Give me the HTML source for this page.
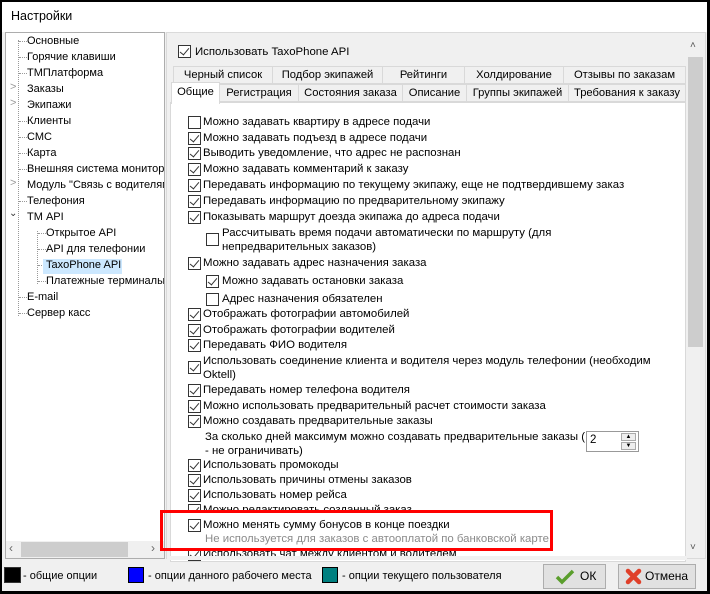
<!DOCTYPE html>
<html><head><meta charset="utf-8"><style>
*{margin:0;padding:0;box-sizing:border-box}
body{width:710px;height:594px;background:#000;font-family:"Liberation Sans",sans-serif;font-size:11.4px;color:#000;position:relative;overflow:hidden}
.a{position:absolute;white-space:nowrap}
#win{position:absolute;left:2px;top:2px;width:705px;height:589px;background:#f0f0f0;overflow:hidden}
#title{position:absolute;left:0;top:0;width:705px;height:30px;background:#fff;font-size:12.5px;padding:7px 0 0 9px}
.cb{position:absolute;width:13px;height:13px;border:1px solid #333;background:#fff}
.cb.c::after{content:"";position:absolute;left:3px;top:0px;width:4px;height:8px;border:solid #333;border-width:0 1.3px 1.3px 0;transform:rotate(40deg)}
.tab{position:absolute;height:18px;border:1px solid #d9d9d9;background:#f0f0f0;text-align:center;line-height:16px;font-size:11.2px}
.t{position:absolute;white-space:nowrap;line-height:14px}
.tr .t{font-size:11px}
.dot{position:absolute;border-left:1px dotted #999}
.hd{position:absolute;border-top:1px dotted #999;height:0}
</style></head><body>
<div id="win">
<div id="title">Настройки</div>
<div class="a" style="left:3px;top:30px;width:160px;height:527px;background:#fff;border:1px solid #adadad"></div>
<div class="dot" style="left:16px;top:38px;height:276px"></div>
<div class="dot" style="left:35px;top:229px;height:53px"></div>
<div style="position:absolute;left:0;top:0">
<div class="hd" style="left:17px;top:39px;width:8px"></div>
<div class="hd" style="left:17px;top:55px;width:8px"></div>
<div class="hd" style="left:17px;top:71px;width:8px"></div>
<div class="hd" style="left:17px;top:119px;width:8px"></div>
<div class="hd" style="left:17px;top:135px;width:8px"></div>
<div class="hd" style="left:17px;top:151px;width:8px"></div>
<div class="hd" style="left:17px;top:167px;width:8px"></div>
<div class="hd" style="left:17px;top:199px;width:8px"></div>
<div class="hd" style="left:36px;top:231px;width:8px"></div>
<div class="hd" style="left:36px;top:247px;width:8px"></div>
<div class="hd" style="left:36px;top:263px;width:8px"></div>
<div class="hd" style="left:36px;top:279px;width:8px"></div>
<div class="hd" style="left:17px;top:295px;width:8px"></div>
<div class="hd" style="left:17px;top:311px;width:8px"></div>
</div>
<div class="a" style="left:8px;top:79px;color:#999;font-size:11px">&gt;</div>
<div class="a" style="left:8px;top:95px;color:#999;font-size:11px">&gt;</div>
<div class="a" style="left:8px;top:175px;color:#999;font-size:11px">&gt;</div>
<div class="a" style="left:7px;top:206px;color:#333;font-size:10px">&#8964;</div>
<div class="a" style="left:41px;top:257px;width:79px;height:15px;background:#cce8ff"></div>
<div class="tr">
<div class="t" style="left:25px;top:32px">Основные</div>
<div class="t" style="left:25px;top:48px">Горячие клавиши</div>
<div class="t" style="left:25px;top:64px">ТМПлатформа</div>
<div class="t" style="left:25px;top:80px">Заказы</div>
<div class="t" style="left:25px;top:96px">Экипажи</div>
<div class="t" style="left:25px;top:112px">Клиенты</div>
<div class="t" style="left:25px;top:128px">СМС</div>
<div class="t" style="left:25px;top:144px">Карта</div>
<div class="t" style="left:25px;top:160px;width:137px;overflow:hidden">Внешняя система мониторинга</div>
<div class="t" style="left:25px;top:176px;width:137px;overflow:hidden">Модуль "Связь с водителями"</div>
<div class="t" style="left:25px;top:192px">Телефония</div>
<div class="t" style="left:25px;top:208px">ТМ API</div>
<div class="t" style="left:44px;top:224px">Открытое API</div>
<div class="t" style="left:44px;top:240px">API для телефонии</div>
<div class="t" style="left:44px;top:256px">TaxoPhone API</div>
<div class="t" style="left:44px;top:272px;width:118px;overflow:hidden">Платежные терминалы</div>
<div class="t" style="left:25px;top:288px">E-mail</div>
<div class="t" style="left:25px;top:304px">Сервер касс</div>
</div>
<div class="a" style="left:4px;top:539px;width:158px;height:17px;background:#f0f0f0"></div>
<div class="a" style="left:19px;top:540px;width:107px;height:15px;background:#cdcdcd"></div>
<div class="a" style="left:7px;top:539px;color:#666;font-size:12px">&lsaquo;</div>
<div class="a" style="left:149px;top:539px;color:#666;font-size:12px">&rsaquo;</div>
<div class="a" style="left:164px;top:30px;width:540px;height:527px;background:#f0f0f0;border:1px solid #dadada"></div>
<div class="a" style="left:685px;top:36px;width:17px;height:520px;background:#f0f0f0"></div>
<div class="a" style="left:686px;top:55px;width:15px;height:290px;background:#cdcdcd"></div>
<div class="a" style="left:688px;top:38px;color:#555;font-size:10px">&#708;</div>
<div class="a" style="left:688px;top:540px;color:#555;font-size:10px">&#709;</div>
<div class="cb c" style="left:176px;top:43px"></div>
<div class="t" style="left:193px;top:43px">Использовать TaxoPhone API</div>
<div class="tab" style="left:171px;top:64px;width:100px">Черный список</div>
<div class="tab" style="left:270px;top:64px;width:111px">Подбор экипажей</div>
<div class="tab" style="left:380px;top:64px;width:83px">Рейтинги</div>
<div class="tab" style="left:462px;top:64px;width:100px">Холдирование</div>
<div class="tab" style="left:561px;top:64px;width:123px">Отзывы по заказам</div>
<div class="a" style="left:168px;top:100px;width:516px;height:460px;background:#fff;border:1px solid #d9d9d9"></div>
<div class="tab" style="left:217px;top:82px;width:80px">Регистрация</div>
<div class="tab" style="left:296px;top:82px;width:105px">Состояния заказа</div>
<div class="tab" style="left:400px;top:82px;width:65px">Описание</div>
<div class="tab" style="left:464px;top:82px;width:103px">Группы экипажей</div>
<div class="tab" style="left:566px;top:82px;width:118px">Требования к заказу</div>
<div class="tab" style="left:169px;top:80px;width:49px;height:22px;background:#fff;border-bottom:none;line-height:18px">Общие</div>
<div class="cb" style="left:186px;top:114px"></div><div class="t" style="left:201px;top:113px">Можно задавать квартиру в адресе подачи</div>
<div class="cb c" style="left:186px;top:130px"></div><div class="t" style="left:201px;top:129px">Можно задавать подъезд в адресе подачи</div>
<div class="cb c" style="left:186px;top:145px"></div><div class="t" style="left:201px;top:144px">Выводить уведомление, что адрес не распознан</div>
<div class="cb c" style="left:186px;top:161px"></div><div class="t" style="left:201px;top:160px">Можно задавать комментарий к заказу</div>
<div class="cb c" style="left:186px;top:177px"></div><div class="t" style="left:201px;top:176px">Передавать информацию по текущему экипажу, еще не подтвердившему заказ</div>
<div class="cb c" style="left:186px;top:193px"></div><div class="t" style="left:201px;top:192px">Передавать информацию по предварительному экипажу</div>
<div class="cb c" style="left:186px;top:209px"></div><div class="t" style="left:201px;top:208px">Показывать маршрут доезда экипажа до адреса подачи</div>
<div class="cb" style="left:204px;top:231px"></div><div class="t" style="left:220px;top:224px">Рассчитывать время подачи автоматически по маршруту (для<br>непредварительных заказов)</div>
<div class="cb c" style="left:186px;top:255px"></div><div class="t" style="left:201px;top:254px">Можно задавать адрес назначения заказа</div>
<div class="cb c" style="left:204px;top:273px"></div><div class="t" style="left:220px;top:272px">Можно задавать остановки заказа</div>
<div class="cb" style="left:204px;top:291px"></div><div class="t" style="left:220px;top:290px">Адрес назначения обязателен</div>
<div class="cb c" style="left:186px;top:306px"></div><div class="t" style="left:201px;top:305px">Отображать фотографии автомобилей</div>
<div class="cb c" style="left:186px;top:322px"></div><div class="t" style="left:201px;top:321px">Отображать фотографии водителей</div>
<div class="cb c" style="left:186px;top:337px"></div><div class="t" style="left:201px;top:336px">Передавать ФИО водителя</div>
<div class="cb c" style="left:186px;top:359px"></div><div class="t" style="left:201px;top:352px">Использовать соединение клиента и водителя через модуль телефонии (необходим<br>Oktell)</div>
<div class="cb c" style="left:186px;top:382px"></div><div class="t" style="left:201px;top:381px">Передавать номер телефона водителя</div>
<div class="cb c" style="left:186px;top:398px"></div><div class="t" style="left:201px;top:397px">Можно использовать предварительный расчет стоимости заказа</div>
<div class="cb c" style="left:186px;top:413px"></div><div class="t" style="left:201px;top:412px">Можно создавать предварительные заказы</div>
<div class="t" style="left:203px;top:428px;width:380px;overflow:hidden">За сколько дней максимум можно создавать предварительные заказы (0<br>- не ограничивать)</div>
<div class="a" style="left:584px;top:429px;width:53px;height:21px;border:1px solid #999;background:#fff;padding:2px 3px;font-size:11.5px">2</div>
<div class="a" style="left:619px;top:431px;width:15px;height:8px;border:1px solid #aaa;background:#eee;font-size:6px;text-align:center;line-height:7px">▲</div>
<div class="a" style="left:619px;top:440px;width:15px;height:8px;border:1px solid #aaa;background:#eee;font-size:6px;text-align:center;line-height:7px">▼</div>
<div class="cb c" style="left:186px;top:457px"></div><div class="t" style="left:201px;top:456px">Использовать промокоды</div>
<div class="cb c" style="left:186px;top:472px"></div><div class="t" style="left:201px;top:471px">Использовать причины отмены заказов</div>
<div class="cb c" style="left:186px;top:487px"></div><div class="t" style="left:201px;top:486px">Использовать номер рейса</div>
<div class="cb c" style="left:186px;top:502px"></div><div class="t" style="left:201px;top:501px">Можно редактировать созданный заказ</div>
<div class="a" style="left:170px;top:508px;width:390px;height:46px;background:#fff"></div>
<div class="cb c" style="left:186px;top:517px"></div><div class="t" style="left:201px;top:516px">Можно менять сумму бонусов в конце поездки</div>
<div class="t" style="left:203px;top:530px;color:#8a8a8a">Не используется для заказов с автооплатой по банковской карте</div>
<div class="cb c" style="left:186px;top:546px"></div><div class="t" style="left:201px;top:545px">Использовать чат между клиентом и водителем</div>
<div class="a" style="left:158px;top:508px;width:393px;height:41px;border:3px solid #f00"></div>
<div class="a" style="left:165px;top:554px;width:520px;height:4px;background:#f0f0f0"></div>
<div class="a" style="left:2px;top:565px;width:17px;height:16px;background:#000;border:1px solid #333"></div>
<div class="t" style="left:21px;top:567px;font-size:11px">- общие опции</div>
<div class="a" style="left:126px;top:565px;width:16px;height:16px;background:#00f;border:1px solid #000"></div>
<div class="t" style="left:146px;top:567px;font-size:11px">- опции данного рабочего места</div>
<div class="a" style="left:320px;top:565px;width:16px;height:16px;background:#008080;border:1px solid #000"></div>
<div class="t" style="left:340px;top:567px;font-size:11px">- опции текущего пользователя</div>
<div class="a" style="left:541px;top:562px;width:63px;height:25px;background:#e1e1e1;border:1px solid #adadad"></div>
<svg class="a" style="left:553px;top:567px" width="20" height="16"><path d="M2 8 L7 13 L18 2" stroke="#5a9e2c" stroke-width="3.5" fill="none"/></svg>
<div class="t" style="left:578px;top:567px;font-size:12px">ОК</div>
<div class="a" style="left:616px;top:562px;width:78px;height:25px;background:#e1e1e1;border:1px solid #adadad"></div>
<svg class="a" style="left:623px;top:566px" width="17" height="17"><path d="M3 3 L14 14 M14 3 L3 14" stroke="#e0402a" stroke-width="4.5" stroke-linecap="round"/></svg>
<div class="t" style="left:643px;top:567px;font-size:12px">Отмена</div>
</div>
</body></html>
